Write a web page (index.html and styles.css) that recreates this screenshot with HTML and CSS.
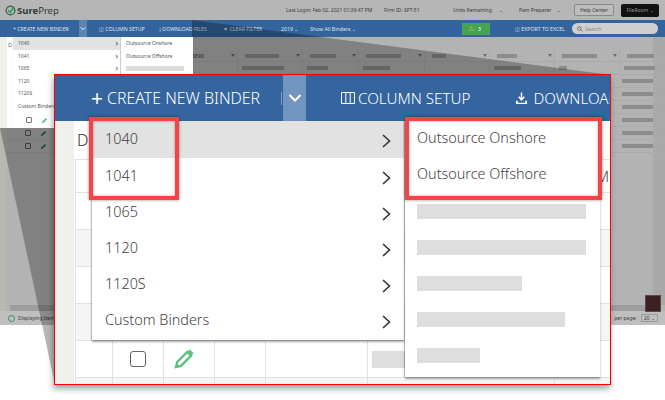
FILE: index.html
```html
<!DOCTYPE html>
<html>
<head>
<meta charset="utf-8">
<title>SurePrep</title>
<link rel="stylesheet" href="styles.css">
</head>
<body>
<div class="stage">
  <div class="app">
    <header class="top">
      <div class="logo">
        <svg class="logo-mark" viewBox="0 0 14 14"><circle cx="7" cy="7" r="5.5" fill="none" stroke="#3d6b5a" stroke-width="1.8"/><path d="M4 6.500l2.600 3L11.500 2" fill="none" stroke="#2f9a4d" stroke-width="1.800"/></svg>
        <span class="logo-a">Sure</span><span class="logo-b">Prep</span>
      </div>
      <div class="top-right">
        <span class="t-last">Last Login: Feb 02, 2021 01:39:47 PM</span>
        <span class="t-firm">Firm ID: SPT-51</span>
        <span class="t-units">Units Remaining</span><span class="t-caret">&#8964;</span>
        <span class="t-pam">Pam Preparer</span><span class="t-caret">&#8964;</span>
        <span class="help">Help Center</span>
        <span class="fileroom">FileRoom &#8964;</span>
      </div>
    </header>
    <nav class="bar">
      <span class="bar-create">+ CREATE NEW BINDER</span>
      <span class="bar-caret"><svg viewBox="0 0 8 6" width="6" height="5"><path d="M1 1.500l3 3 3-3" fill="none" stroke="#fff" stroke-width="1.300"/></svg></span>
      <span class="b-col">&#9707; COLUMN SETUP</span>
      <span class="b-dl">&#10515; DOWNLOAD FILES</span>
      <span class="b-clear">&#9660; CLEAR FILTER</span>
      <span class="b-year">2019 &#8964;</span>
      <span class="b-show">Show All Binders &#8964;</span>
      <span class="alert"><b class="alert-tri">&#9888;</b><b class="alert-n">3</b></span>
      <span class="b-export">&#9707; EXPORT TO EXCEL</span>
      <span class="search"><svg viewBox="0 0 8 8" width="6" height="6"><circle cx="3.200" cy="3.200" r="2.400" fill="none" stroke="#555"/><path d="M5 5l2.500 2.500" stroke="#555"/></svg>Search</span>
    </nav>
    <div class="content">
      <div class="t-row t-head">
        <span class="c c0">MEMBERS<b class="tri"></b></span>
        <span class="c"><i class="blk h34"></i><b class="tri"></b></span>
        <span class="c"><i class="blk h26"></i><b class="tri"></b></span>
        <span class="c"><i class="blk h35"></i><b class="tri"></b></span>
        <span class="c"><i class="blk h14"></i><b class="tri"></b></span>
        <span class="c"><i class="blk h20"></i><b class="tri"></b></span>
        <span class="c"><i class="blk h35"></i><b class="tri"></b></span>
        <span class="c"><i class="blk h27"></i></span>
      </div>
      <div class="t-row">
        <span class="c c0"></span>
        <span class="c cd"><i class="blk d42"></i></span>
        <span class="c cd"><i class="blk d21"></i></span>
        <span class="c cd"><i class="blk d27"></i></span>
        <span class="c cd"></span>
        <span class="c cd"><i class="blk d27"></i></span>
        <span class="c cd"><i class="blk d8"></i></span>
        <span class="c cd"><i class="blk d31"></i></span>
      </div>
      <div class="t-row t-right"><i class="blk d31"></i></div>
      <div class="t-row t-right"><i class="blk d31"></i></div>
      <div class="t-row t-right"><i class="blk d31"></i></div>
      <div class="t-row t-right"><i class="blk d31"></i></div>
      <div class="t-row t-right t-sm"><span class="sm"><i class="ck"></i><svg class="pen-s" viewBox="0 0 16 16"><path d="M2 14l1-4 8-8 3 3-8 8z" fill="#1f6e40"/></svg></span><i class="blk d31"></i></div>
      <div class="t-row t-right t-sm"><span class="sm"><i class="ck"></i><svg class="pen-s" viewBox="0 0 16 16"><path d="M2 14l1-4 8-8 3 3-8 8z" fill="#1f6e40"/></svg></span><i class="blk d31"></i></div>
      <div class="t-fill"></div>
      <div class="hscroll"></div>
    </div>
    <footer class="foot">
      <span class="foot-l"><i class="spin"></i>Displaying Items</span>
      <span class="foot-r">per page: <b class="pp">20 &#8964;</b></span>
    </footer>
  </div>
  <svg class="wedge" viewBox="0 0 665 400"><polygon points="192,20 611,75 611,385 55,385 0,128 192,128" fill="#000" fill-opacity=".28"/></svg>
  <div class="mini">
    <div class="mini-strip"></div>
    <div class="mini-de">D</div>
    <div class="mini-list">
      <div class="mini-row on">1040<b class="mini-ch">&#8250;</b></div>
      <div class="mini-row">1041<b class="mini-ch">&#8250;</b></div>
      <div class="mini-row">1065<b class="mini-ch">&#8250;</b></div>
      <div class="mini-row">1120</div>
      <div class="mini-row">1120S</div>
      <div class="mini-row">Custom Binders</div>
      <div class="mini-check"><i class="ck-light"></i><svg class="pen-s" viewBox="0 0 16 16"><path d="M2 14l1-4 8-8 3 3-8 8z" fill="#5cbf83"/></svg></div>
    </div>
    <div class="mini-sub">
      <div class="mini-row">Outsource Onshore</div>
      <div class="mini-row">Outsource Offshore</div>
      <div class="mini-row"><i class="mini-blk"></i></div>
    </div>
  </div>
  <i class="dark-sq"></i>

  <section class="panel">
    <div class="p-bar">
      <span class="p-create"><b class="p-plus">+</b>CREATE NEW BINDER</span>
      <span class="p-sep"></span>
      <span class="p-caret"><svg viewBox="0 0 14 10" width="14" height="10"><path d="M1.500 2l5.500 5.500L12.500 2" fill="none" stroke="#fff" stroke-width="2"/></svg></span>
      <span class="p-col"><svg viewBox="0 0 14 12" width="14" height="12"><path d="M.5.500h13v11H.5zM4.800.500v11M9.200.500v11" fill="none" stroke="#fff"/></svg>COLUMN SETUP</span>
      <span class="p-dl"><svg viewBox="0 0 14 13" width="13" height="13"><path d="M7 0v7M4 4.500L7 8l3-3.500" fill="none" stroke="#fff" stroke-width="1.600"/><path d="M1 9h2v2h8V9h2v3.500H1z" fill="#fff"/></svg>DOWNLOAD</span>
    </div>
    <div class="p-body">
      <div class="p-strip"></div>
      <div class="p-grid">
        <div class="g-title">D</div>
        <div class="g-row g-first"><span class="peek">M</span></div>
        <div class="g-row"></div>
        <div class="g-row alt"></div>
        <div class="g-row"></div>
        <div class="g-row alt"></div>
        <div class="g-row">
          <span class="g-a"></span>
          <span class="g-b"><i class="big-ck"></i></span>
          <span class="g-c"><svg viewBox="0 0 20 20" width="20" height="20"><path d="M2 18l1.200-5L13.200 3l3.800 3.800L7 16.800z" fill="none" stroke="#5cbf83" stroke-width="2.400"/><path d="M2 18l1-3.500 2.500 2.500z" fill="#5cbf83"/><path d="M14.800 1.500l3.700 3.700" stroke="#5cbf83" stroke-width="3"/></svg></span>
          <span class="g-d"></span>
          <span class="g-e"></span>
          <span class="g-f"><i class="g-blk"></i></span>
        </div>
        <div class="g-row alt g-end">
          <span class="g-a"></span>
          <span class="g-b"></span>
          <span class="g-c"></span>
          <span class="g-d"></span>
          <span class="g-e"></span>
          <span class="g-f"></span>
        </div>
      </div>
    </div>
  </section>

  <div class="menu">
    <div class="m-row on">1040<svg class="chev" viewBox="0 0 9 14"><path d="M1 1l6.500 6L1 13" fill="none" stroke="#333" stroke-width="1.600"/></svg></div>
    <div class="m-row">1041<svg class="chev" viewBox="0 0 9 14"><path d="M1 1l6.500 6L1 13" fill="none" stroke="#333" stroke-width="1.600"/></svg></div>
    <div class="m-row">1065<svg class="chev" viewBox="0 0 9 14"><path d="M1 1l6.500 6L1 13" fill="none" stroke="#333" stroke-width="1.600"/></svg></div>
    <div class="m-row">1120<svg class="chev" viewBox="0 0 9 14"><path d="M1 1l6.500 6L1 13" fill="none" stroke="#333" stroke-width="1.600"/></svg></div>
    <div class="m-row">1120S<svg class="chev" viewBox="0 0 9 14"><path d="M1 1l6.500 6L1 13" fill="none" stroke="#333" stroke-width="1.600"/></svg></div>
    <div class="m-row">Custom Binders<svg class="chev" viewBox="0 0 9 14"><path d="M1 1l6.500 6L1 13" fill="none" stroke="#333" stroke-width="1.600"/></svg></div>
  </div>
  <div class="submenu">
    <div class="s-row s-text">Outsource Onshore</div>
    <div class="s-row s-text">Outsource Offshore</div>
    <div class="s-row"><i class="s-blk w169"></i></div>
    <div class="s-row"><i class="s-blk w169"></i></div>
    <div class="s-row"><i class="s-blk w105"></i></div>
    <div class="s-row"><i class="s-blk w148"></i></div>
    <div class="s-row"><i class="s-blk w63"></i></div>
  </div>
  <i class="hl hl-a"></i>
  <i class="hl hl-b"></i>
</div>
</body>
</html>
```

FILE: styles.css
```css
* { box-sizing: border-box; }
html, body { margin: 0; padding: 0; background: #fff; }
body { font-family: "Noto Sans", sans-serif; overflow: hidden; }
i, b { font-style: normal; font-weight: normal; }
.stage { position: relative; width: 665px; height: 400px; overflow: hidden; }

.app { width: 665px; height: 325px; display: flex; flex-direction: column; background: #b3b3b3; color: #3a3a3a; font-size: 5px; white-space: nowrap; }
.top { height: 20px; display: flex; align-items: center; justify-content: space-between; padding: 0 6px 0 5px; background: #b6b6b6; }
.logo { display: flex; align-items: center; font-size: 9.500px; font-weight: 700; color: #2d3b36; }
.logo-mark { width: 11px; height: 11px; margin-right: 1px; }
.logo-b { font-weight: 400; }
.top-right { display: flex; align-items: center; }
.t-last { width: 98px; }
.t-firm { width: 69px; }
.t-units { width: 46px; }
.t-caret { width: 20px; }
.t-pam { width: 38px; }
.t-pam + .t-caret { width: 17px; }
.help { width: 40px; height: 12px; line-height: 10px; text-align: center; border: 1px solid #8a8a8a; border-radius: 2px; background: #bdbdbd; }
.fileroom { margin-left: 7px; width: 38px; height: 13px; line-height: 13px; text-align: center; background: #111; color: #999; border-radius: 2px; }

.bar { height: 17px; display: flex; align-items: center; background: #34649d; color: #dfe6ef; font-size: 5.200px; }
.bar-create { margin-left: 13px; width: 66px; }
.bar-caret { width: 8px; height: 17px; background: #5d83b0; display: flex; align-items: center; justify-content: center; }
.b-col { margin-left: 12px; width: 60px; }
.b-dl { width: 64px; }
.b-clear { width: 58px; }
.b-year { width: 29px; }
.b-show { width: 152px; }
.alert { width: 28px; height: 12px; background: #45a356; display: flex; align-items: center; padding-left: 6px; gap: 4px; color: #fff; }
.alert-tri { color: #e6c83a; font-size: 7px; line-height: 1; }
.b-export { margin-left: 25px; width: 57px; }
.search { width: 86px; height: 11px; border-radius: 6px; background: #cfcfcf; color: #888; padding-left: 5px; display: flex; align-items: center; gap: 2px; }

.content { flex: 1; background: linear-gradient(to left, #a9a9a9 12px, transparent 12px) no-repeat 0 0 / 100% 268px, #b3b3b3; padding-top: 13px; display: flex; flex-direction: column; border-left: 7px solid #b7b8b2; }
.t-row { height: 13px; display: grid; grid-template-columns: 231px 65px 56px 66px 65px 65px 65px 35px; border-bottom: 1px solid #ababab; flex: none; }
.t-head { height: 12px; }
.c { position: relative; display: flex; align-items: center; padding-left: 7px; border-right: 1px solid #ababab; font-size: 5px; }
.c0 { justify-content: flex-end; padding-right: 33px; }
.cd { padding-left: 4px; }
.tri { position: absolute; right: 2px; top: 4px; border: 2.500px solid transparent; border-top: 3px solid #6a6a6a; border-bottom: 0; }
.blk { display: block; height: 4px; background: #8c8c8c; flex: none; }
.h34 { width: 34px; } .h26 { width: 26px; } .h35 { width: 35px; } .h14 { width: 14px; } .h20 { width: 20px; } .h27 { width: 27px; }
.d42 { width: 42px; } .d21 { width: 21px; } .d27 { width: 27px; } .d8 { width: 8px; } .d31 { width: 31px; }
.t-right { display: flex; align-items: center; justify-content: flex-end; padding-right: 12px; }
.t-sm { justify-content: space-between; padding-left: 18px; }
.sm { display: flex; align-items: center; gap: 9px; }
.ck { display: block; width: 6px; height: 6px; border: 1px solid #555; border-radius: 1px; }
.ck-light { display: block; width: 6px; height: 6px; border: 1px solid #777; border-radius: 1px; background: #fff; }
.pen-s { width: 7px; height: 7px; display: block; }
.t-fill { flex: 1; }
.hscroll { height: 6px; margin: 0 11px 0 3px; background: #9d9d9d; }

.foot { height: 14px; background: #bfbfbf; display: flex; align-items: center; justify-content: space-between; padding: 0 7px 0 8px; font-size: 5px; }
.foot-l { display: flex; align-items: center; gap: 3px; }
.spin { display: block; width: 7px; height: 7px; border: 1.500px solid #2f8f57; border-radius: 50%; }
.pp { border: 1px solid #999; padding: 0 2px; margin-left: 3px; }

.wedge { position: absolute; left: 0; top: 0; width: 665px; height: 400px; }
.dark-sq { position: absolute; left: 645px; top: 295px; width: 16px; height: 17px; background: #3d2024; border: 1px solid #5a4a4a; }

.mini { position: absolute; left: 0; top: 37px; width: 193px; height: 91px; display: flex; background: #fff; font-size: 5px; color: #555; white-space: nowrap; overflow: hidden; }
.mini-strip { width: 7px; background: #f0f0ea; }
.mini-de { width: 6px; padding: 4px 0 0 1px; font-size: 5.500px; }
.mini-list { width: 107px; box-shadow: 0 1px 1px rgba(0,0,0,.2); }
.mini-sub { width: 73px; border-left: 1px solid #ccc; padding-left: 1px; }
.mini-row { height: 12.500px; padding: 0 2px 0 5px; display: flex; align-items: center; justify-content: space-between; }
.mini-sub .mini-row { padding-left: 4px; justify-content: flex-start; }
.mini-row.on { background: #e2e2e2; }
.mini-ch { font-size: 8px; color: #333; line-height: 1; }
.mini-check { height: 16px; margin-left: -13px; padding-left: 26px; display: flex; align-items: center; gap: 9px; width: 107px; }
.mini-blk { display: block; width: 58px; height: 5px; background: #ddd; }

.panel { position: absolute; left: 54px; top: 74px; width: 557px; height: 311px; border: 1px solid #f00; background: #fff; box-shadow: -1px 4px 6px rgba(0,0,0,.35); overflow: hidden; }
.p-bar { height: 46px; background: #34659f; color: #fff; display: flex; align-items: center; white-space: nowrap; }
.p-bar > span { flex: none; }
.p-create { margin-left: 36px; width: 190px; display: flex; align-items: center; font-size: 15.900px; font-weight: 300; }
.p-plus { font-size: 21px; margin-right: 4px; line-height: 1; }
.p-sep { width: 1px; height: 13px; background: #7f9ec4; }
.p-caret { margin-left: 1px; width: 23px; height: 46px; background: #7195c1; display: flex; align-items: center; justify-content: center; }
.p-col { margin-left: 35px; display: flex; align-items: center; gap: 3px; font-size: 15.200px; font-weight: 300; }
.p-dl { margin-left: 45px; display: flex; align-items: center; gap: 5px; font-size: 15.200px; font-weight: 300; }
.p-body { display: flex; height: 263px; }
.p-strip { width: 19px; background: #f0f0ea; flex: none; }
.p-grid { flex: 1; }
.g-title { height: 39px; padding: 8px 0 0 3px; font-size: 16px; font-weight: 300; color: #3a2a2a; border-bottom: 1px solid #e1e1e1; }
.g-row { height: 37px; border-bottom: 1px solid #e1e1e1; border-left: 1px solid #e1e1e1; margin-left: 1px; background: #fff; display: flex; }
.g-first { height: 33px; justify-content: flex-end; padding-right: 1px; }
.g-row.alt { background: #f5f5f5; }
.peek { font-size: 15px; font-weight: 300; color: #444; line-height: 33px; }
.g-a { width: 37px; border-right: 1px solid #e1e1e1; }
.g-b { width: 51px; border-right: 1px solid #e1e1e1; display: flex; align-items: center; justify-content: center; }
.g-c { width: 51px; border-right: 1px solid #e1e1e1; display: flex; align-items: center; padding-left: 10px; }
.g-d { width: 51px; border-right: 1px solid #e1e1e1; }
.g-e { width: 102px; border-right: 1px solid #e1e1e1; }
.g-f { width: 187px; border-right: 1px solid #e1e1e1; padding: 10px 0 0 4px; }
.g-blk { display: block; width: 40px; height: 17px; background: #dedede; }
.g-end { height: 7px; border-bottom: 0; }
.big-ck { display: block; width: 16px; height: 16px; border: 1.500px solid #666; border-radius: 3px; }

.menu { position: absolute; left: 92px; top: 121px; width: 312px; height: 219px; background: #fff; box-shadow: 0 2px 2px rgba(0,0,0,.35), -1px 0 1px rgba(0,0,0,.15); }
.m-row { height: 36px; padding: 0 13px 2px; display: flex; align-items: center; justify-content: space-between; font-size: 14.400px; font-weight: 300; color: #3f3f3f; }
.m-row.on { background: #e2e2e2; height: 37px; }
.chev { width: 9px; height: 14px; margin-top: 5px; }
.submenu { position: absolute; left: 405px; top: 120px; width: 195px; height: 257px; padding-top: 1px; background: #fff; box-shadow: 0 2px 2px rgba(0,0,0,.35), -1px 0 1px rgba(0,0,0,.2); }
.s-row { height: 36px; padding: 0 12px; display: flex; align-items: center; font-size: 14.400px; font-weight: 300; color: #3f3f3f; }
.s-text { padding-bottom: 3px; }
.s-blk { display: block; height: 15px; background: #dedede; }
.w169 { width: 169px; } .w105 { width: 105px; } .w148 { width: 148px; } .w63 { width: 63px; }

.hl { position: absolute; border: 4px solid #f64347; box-shadow: 0 0 3px rgba(0,0,0,.45), inset 0 0 3px rgba(0,0,0,.35); }
.hl-a { left: 89px; top: 117px; width: 90px; height: 83px; }
.hl-b { left: 405px; top: 117px; width: 197px; height: 83px; }
```
